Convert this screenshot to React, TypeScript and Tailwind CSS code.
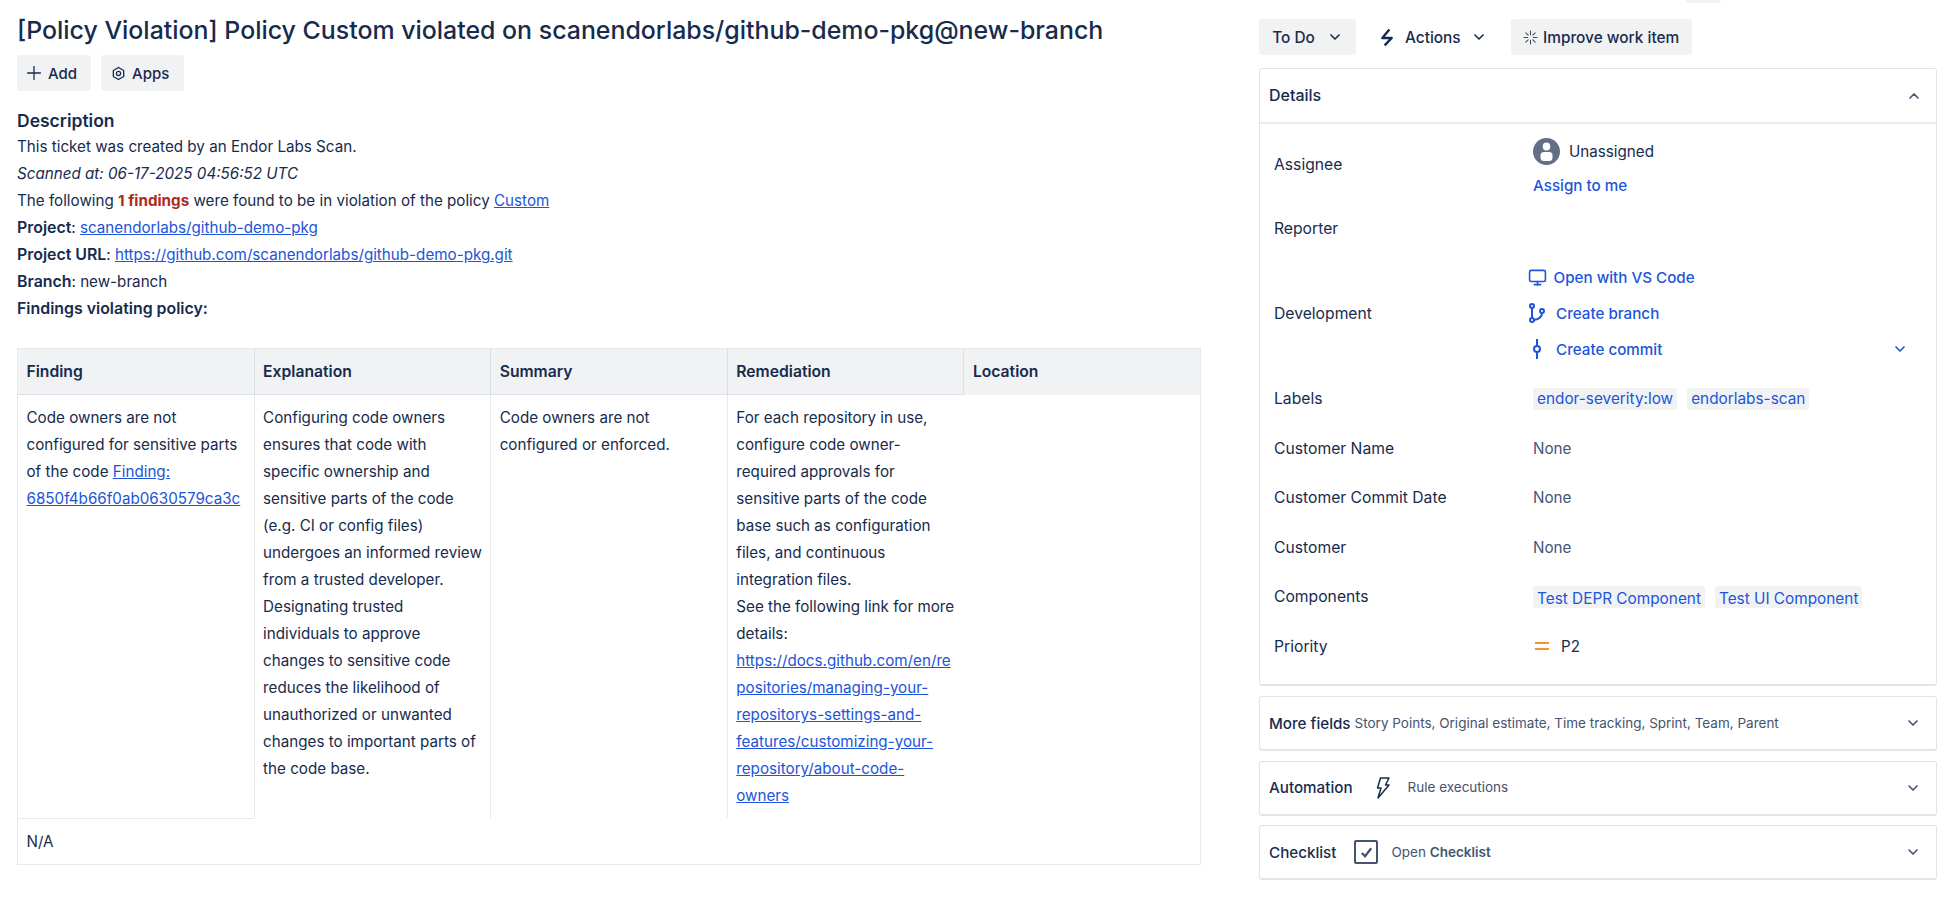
import { ChevronDown, ChevronUp, Monitor, Plus } from 'lucide-react';

const Link = ({ children }: { children: React.ReactNode }) => (
  <a className="text-[#1c55d9] underline">{children}</a>
);

function Bolt() {
  return (
    <svg viewBox="0 0 15 20" className="h-[19px] w-[14px]" fill="none" stroke="#172b4d" strokeWidth="2.6" strokeLinejoin="round">
      <path d="M10 1.5 2.5 10.5h10L5 18.5" />
    </svg>
  );
}

function Sparkle() {
  return (
    <svg viewBox="0 0 16 16" className="h-[15px] w-[15px]" stroke="#3b4a63" strokeWidth="1.1" strokeLinecap="round">
      <path d="M8 1v4M8 11v4M1 8h4M11 8h4M3 3l2.5 2.5M10.5 10.5 13 13M13 3l-2.5 2.5M5.5 10.5 3 13" />
    </svg>
  );
}

function HexIcon() {
  return (
    <svg viewBox="0 0 16 16" className="h-[15px] w-[15px]" fill="none" stroke="#172b4d" strokeWidth="1.4">
      <path d="M8 1.6 13.5 4.8v6.4L8 14.4 2.5 11.2V4.8z" strokeLinejoin="round" />
      <circle cx="8" cy="8" r="2.2" />
    </svg>
  );
}

function Avatar() {
  return (
    <svg viewBox="0 0 27 27" className="h-[27px] w-[27px]">
      <circle cx="13.5" cy="13.5" r="13.5" fill="#626f86" />
      <ellipse cx="13.5" cy="8.5" rx="3.8" ry="4" fill="#fff" />
      <rect x="7.5" y="14" width="12" height="9" rx="3.5" fill="#fff" />
    </svg>
  );
}

function BranchIcon() {
  return (
    <svg viewBox="0 0 16 20" className="h-[20px] w-[16px]" fill="none" stroke="#1c55d9" strokeWidth="2">
      <circle cx="3" cy="3" r="2" />
      <circle cx="3" cy="17" r="2" />
      <circle cx="13" cy="8" r="2" />
      <path d="M3 5v10M13 10c0 4-2.5 6-8 7" />
    </svg>
  );
}

function CommitIcon() {
  return (
    <svg viewBox="0 0 16 20" className="h-[20px] w-[16px]" fill="none" stroke="#1c55d9" strokeWidth="2">
      <circle cx="8" cy="10" r="3" />
      <path d="M8 0v7M8 13v7" />
    </svg>
  );
}

function Row({ label, h, children }: { label: string; h: string; children?: React.ReactNode }) {
  return (
    <div className={`flex items-center ${h}`}>
      <div className="w-[259px] shrink-0 text-[15.7px] text-[#172b4d]">{label}</div>
      <div className="min-w-0 flex-1">{children}</div>
    </div>
  );
}

function Chip({ children, cls }: { children: React.ReactNode; cls?: string }) {
  return (
    <span className={`flex h-[22px] items-center rounded-[3px] bg-[#f1f2f4] px-1 text-[15.35px] text-[#1c55d9] ${cls ?? ''}`}>{children}</span>
  );
}

function Collapsed({ title, children }: { title: string; children?: React.ReactNode }) {
  return (
    <div className="flex h-[55px] items-center rounded-[3px] border border-[#e2e4e9] border-b-2 pl-[9px] pr-[15px]">
      <span className="font-medium text-[#172b4d]">{title}</span>
      {children}
      <ChevronDown className="ml-auto h-4 w-4 text-[#44546f]" strokeWidth={2.5} />
    </div>
  );
}

const bold = 'text-[15.9px] font-semibold';
const th = 'border-r border-b border-[#dcdfe4] bg-[#f1f2f4] px-[8.5px] text-left text-[15.7px] font-semibold h-[46px]';
const td = 'border-r border-[#e7e9ed] pl-[8.5px] pr-[6px] py-[9px] align-top';

export default function App() {
  return (
    <div className="flex h-[897px] overflow-hidden bg-white pl-[17px] font-['Inter',sans-serif] text-[15.2px] leading-[27px] text-[#172b4d]">
      <div className="w-[1184px] shrink-0">
        <h1 className="mt-[14px] text-[24.9px] font-medium leading-[32px]">
          [Policy Violation] Policy Custom violated on scanendorlabs/github-demo-pkg@new-branch
        </h1>
        <div className="mt-[9px] flex gap-[10px] text-[15px] font-medium">
          <button className="flex h-9 w-[74px] items-center gap-[3px] rounded-[3px] bg-[#f1f2f4] pl-[6px]">
            <Plus className="h-[22px] w-[22px]" strokeWidth={1.4} /> Add
          </button>
          <button className="flex h-9 w-[83px] items-center gap-[6px] rounded-[3px] bg-[#f1f2f4] pl-[10px]">
            <HexIcon /> Apps
          </button>
        </div>
        <h2 className="mt-[17px] text-[17.5px] font-semibold leading-[26px]">Description</h2>
        <div className="-mt-[1px]">
          <p>This ticket was created by an Endor Labs Scan.</p>
          <p className="italic">Scanned at: 06-17-2025 04:56:52 UTC</p>
          <p>
            The following <b className="font-bold text-[#ae2a19]">1 findings</b> were found to be in violation of the policy <Link>Custom</Link>
          </p>
          <p><b className={bold}>Project</b>: <Link>scanendorlabs/github-demo-pkg</Link></p>
          <p><b className={bold}>Project URL</b>: <Link>https://github.com/scanendorlabs/github-demo-pkg.git</Link></p>
          <p><b className={bold}>Branch</b>: new-branch</p>
          <p><b className={bold}>Findings violating policy:</b></p>
        </div>
        <table className="mt-[26px] w-[1184px] table-fixed border-collapse border border-[#e7e9ed]">
          <thead>
            <tr>
              <th className={th}>Finding</th>
              <th className={th}>Explanation</th>
              <th className={th}>Summary</th>
              <th className={th}>Remediation</th>
              <th className="h-[46px] bg-[#f1f2f4] px-[8.5px] text-left text-[15.7px] font-semibold">Location</th>
            </tr>
          </thead>
          <tbody>
            <tr>
              <td className={`${td} border-b`}>
                Code owners are not configured for sensitive parts of the code <Link>Finding: 6850f4b66f0ab0630579ca3c</Link>
              </td>
              <td className={td}>
                Configuring code owners ensures that code with specific ownership and sensitive parts of the code (e.g. CI or config files) undergoes an informed review from a trusted developer. Designating trusted
                <br />
                individuals to approve changes to sensitive code reduces the likelihood of unauthorized or unwanted changes to important parts of the code base.
              </td>
              <td className={td}>Code owners are not configured or enforced.</td>
              <td className="px-[8.5px] py-[9px] align-top">
                For each repository in use, configure code owner-required approvals for sensitive parts of the code base such as configuration files, and continuous integration files.
                <br />
                See the following link for more details:
                <br />
                <span className="break-words">
                  <Link>https://docs.github.com/en/repositories/managing-your-repositorys-settings-and-features/customizing-your-repository/about-code-owners</Link>
                </span>
              </td>
              <td className="p-[9px]" />
            </tr>
            <tr>
              <td className="h-[46px] px-[8.5px]" colSpan={5}>N/A</td>
            </tr>
          </tbody>
        </table>
      </div>

      <div className="ml-[58px] w-[678px] shrink-0">
        <div className="relative mt-[19px] flex items-center text-[15.4px] font-medium">
          <div className="absolute -top-[19px] left-[427px] h-[3px] w-[35px] rounded-b-[3px] bg-[#f1f2f4]" />
          <button className="flex h-9 w-[97px] items-center justify-center gap-3 rounded-[3px] bg-[#f1f2f4]">
            To Do <ChevronDown className="h-4 w-4" strokeWidth={2.5} />
          </button>
          <button className="ml-[24px] flex h-9 items-center">
            <Bolt />
            <span className="ml-[11px]">Actions</span>
            <ChevronDown className="ml-[10px] h-4 w-4" strokeWidth={2.5} />
          </button>
          <button className="ml-[24px] flex h-9 w-[181px] items-center justify-center gap-[5px] rounded-[3px] bg-[#f1f2f4]">
            <Sparkle /> Improve work item
          </button>
        </div>

        <div className="mt-[13px] h-[618px] rounded-[3px] border border-[#e2e4e9] border-b-2">
          <div className="flex h-[55px] items-center border-b-2 border-[#e9ebee] pl-[9px] pr-[14px]">
            <span className="text-[16px] font-medium">Details</span>
            <ChevronUp className="ml-auto h-4 w-4 text-[#44546f]" strokeWidth={2.5} />
          </div>
          <div className="pl-[14px] pr-[20px]">
            <Row label="Assignee" h="h-[80px]">
              <div className="pt-[8px]">
                <div className="flex items-center gap-[9px]">
                  <Avatar /> <span>Unassigned</span>
                </div>
                <div className="mt-[7px] font-medium text-[#1c55d9]">Assign to me</div>
              </div>
            </Row>
            <Row label="Reporter" h="h-[48px]" />
            <Row label="Development" h="h-[122px]">
              <div className="flex flex-col gap-[9px] font-medium text-[#1c55d9]">
                <div className="-ml-[5px] flex h-[27px] items-center gap-[6.5px]">
                  <Monitor className="h-[19px] w-[19px]" strokeWidth={2} /> Open with VS Code
                </div>
                <div className="-ml-[4px] flex h-[27px] items-center gap-[11px]">
                  <BranchIcon /> Create branch
                </div>
                <div className="-ml-[4px] flex h-[27px] items-center gap-[11px] pr-[8px]">
                  <CommitIcon /> Create commit
                  <ChevronDown className="ml-auto h-4 w-4" strokeWidth={2.5} />
                </div>
              </div>
            </Row>
            <Row label="Labels" h="h-[49.5px]">
              <div className="flex gap-[10px]">
                <Chip>endor-severity:low</Chip>
                <Chip>endorlabs-scan</Chip>
              </div>
            </Row>
            <Row label="Customer Name" h="h-[49.5px]"><span className="text-[#44546f]">None</span></Row>
            <Row label="Customer Commit Date" h="h-[49.5px]"><span className="text-[#44546f]">None</span></Row>
            <Row label="Customer" h="h-[49.5px]"><span className="text-[#44546f]">None</span></Row>
            <Row label="Components" h="h-[49.5px]">
              <div className="flex gap-[10px]">
                <Chip cls="pt-[3px]">Test DEPR Component</Chip>
                <Chip cls="pt-[3px]">Test UI Component</Chip>
              </div>
            </Row>
            <Row label="Priority" h="h-[49.5px]">
              <div className="flex items-center gap-3">
                <span className="ml-[2px] flex w-[14px] flex-col gap-[4px]">
                  <span className="h-[2px] bg-[#f79232]" />
                  <span className="h-[2px] bg-[#f79232]" />
                </span>
                <span>P2</span>
              </div>
            </Row>
          </div>
        </div>

        <div className="mt-[10px] flex flex-col gap-[9.5px]">
          <Collapsed title="More fields">
            <span className="ml-[4px] text-[13.5px] text-[#44546f]">Story Points, Original estimate, Time tracking, Sprint, Team, Parent</span>
          </Collapsed>
          <Collapsed title="Automation">
            <svg viewBox="0 0 16 22" className="ml-[22px] h-[22px] w-[16px]" fill="none" stroke="#172b4d" strokeWidth="1.5" strokeLinejoin="round">
              <path d="M5.5 1H14l-3.5 7H14L3 21l3-10H2.5z" />
            </svg>
            <span className="ml-[17px] text-[13.5px] text-[#44546f]">Rule executions</span>
          </Collapsed>
          <Collapsed title="Checklist">
            <span className="ml-[18px] flex h-[24px] w-[24px] items-center justify-center rounded-[2px] border-2 border-[#44546f]">
              <svg viewBox="0 0 16 16" className="h-[15px] w-[15px]" fill="none" stroke="#44546f" strokeWidth="2.4">
                <path d="M3 8.5 6.5 12 13 3.5" />
              </svg>
            </span>
            <span className="ml-[13px] text-[13.5px] text-[#44546f]">Open <b className="font-semibold">Checklist</b></span>
          </Collapsed>
        </div>
      </div>
    </div>
  );
}
